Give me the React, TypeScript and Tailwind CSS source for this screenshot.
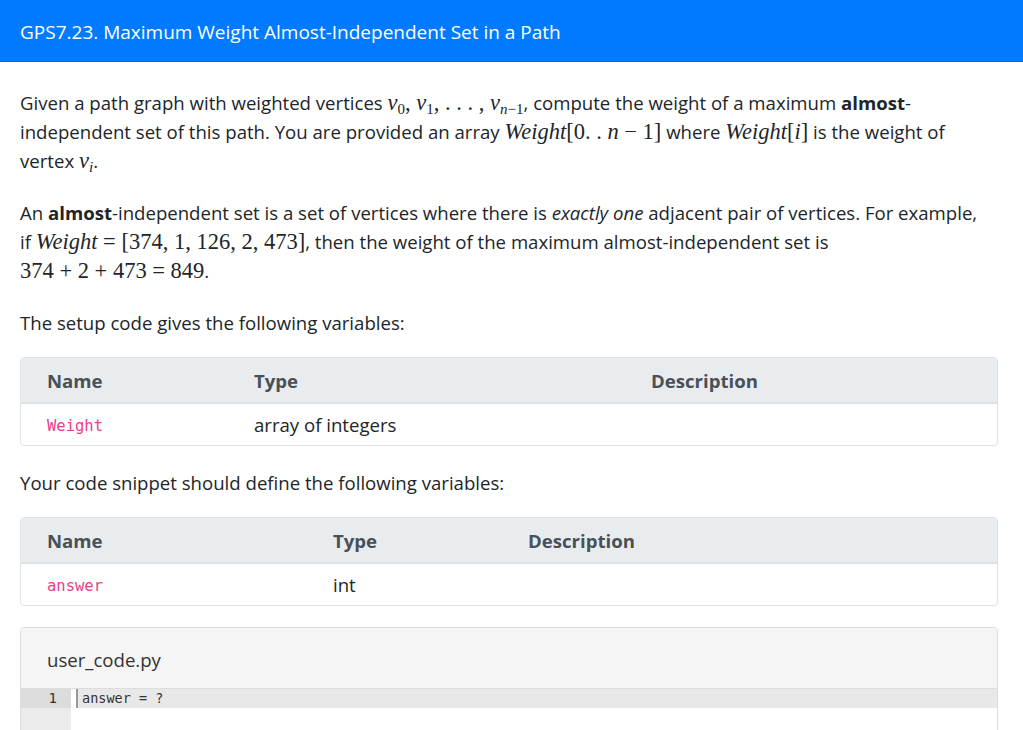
import React from 'react';

// math bits, rendered in a serif face like KaTeX
const M = ({ children }: { children: React.ReactNode }) => (
  <span className="font-['Liberation_Serif',serif] text-[22.5px] leading-none whitespace-nowrap">{children}</span>
);
const I = ({ children }: { children: React.ReactNode }) => <i>{children}</i>;
const Sub = ({ children }: { children: React.ReactNode }) => (
  <sub className="text-[15px] leading-none">{children}</sub>
);

const Code = ({ children }: { children: React.ReactNode }) => (
  <code className="font-['DejaVu_Sans_Mono',monospace] text-[15.5px] text-[#e83e8c]">{children}</code>
);

type Row = { name: string; type: string; desc: string };

const VarTable = ({ rows, w1, w2 }: { rows: Row[]; w1: string; w2: string }) => (
  <div className="border border-[#dee2e6] rounded-[4px] overflow-hidden">
    <table className="w-full text-left border-collapse">
      <thead>
        <tr className="bg-[#e9ecef] text-[#495057] border-b-2 border-[#dee2e6]">
          <th className={`${w1} h-[45px] pl-[26px] font-bold`}>Name</th>
          <th className={`${w2} h-[45px] font-bold`}>Type</th>
          <th className="h-[45px] font-bold">Description</th>
        </tr>
      </thead>
      <tbody>
        {rows.map((r) => (
          <tr key={r.name}>
            <td className="h-[42px] pl-[26px]">
              <Code>{r.name}</Code>
            </td>
            <td className="h-[42px]">{r.type}</td>
            <td className="h-[42px]">{r.desc}</td>
          </tr>
        ))}
      </tbody>
    </table>
  </div>
);

export default function App() {
  return (
    <div className="min-h-[730px] bg-white text-[#212529] font-['Open_Sans',sans-serif] text-[18.6px] leading-[29px]">
      {/* card header */}
      <div className="h-[62px] bg-[#007bff] border-b border-[#0069d9] flex items-center px-5 pt-[3px] text-white text-[19px]">
        GPS7.23. Maximum Weight Almost-Independent Set in a Path
      </div>

      <div className="pl-5 pr-[25px] pt-[26px]">
        <p className="mb-[23px]">
          Given a path graph with weighted vertices{' '}
          <M>
            <I>v</I>
            <Sub>0</Sub>, <I>v</I>
            <Sub>1</Sub>, . . . , <I>v</I>
            <Sub>
              <I>n</I>−1
            </Sub>
          </M>
          , compute the weight of a maximum <b>almost</b>-<br />
          independent set of this path. You are provided an array{' '}
          <M>
            <I>Weight</I>[0. . <I>n</I> − 1]
          </M>{' '}
          where{' '}
          <M>
            <I>Weight</I>[<I>i</I>]
          </M>{' '}
          is the weight of
          <br />
          vertex{' '}
          <M>
            <I>v</I>
            <Sub>
              <I>i</I>
            </Sub>
          </M>
          .
        </p>

        <p className="mb-[23px]">
          An <b>almost</b>-independent set is a set of vertices where there is <i>exactly one</i> adjacent pair of
          vertices. For example,
          <br />
          if{' '}
          <M>
            <I>Weight</I> = [374, 1, 126, 2, 473]
          </M>
          , then the weight of the maximum almost-independent set is
          <br />
          <M>374 + 2 + 473 = 849</M>.
        </p>

        <p className="mb-[20px]">The setup code gives the following variables:</p>

        <VarTable rows={[{ name: 'Weight', type: 'array of integers', desc: '' }]} w1="w-[233px]" w2="w-[397px]" />

        <p className="mt-[22px] mb-[20px]">Your code snippet should define the following variables:</p>

        <VarTable rows={[{ name: 'answer', type: 'int', desc: '' }]} w1="w-[312px]" w2="w-[195px]" />

        {/* code editor card */}
        <div className="mt-[21px] border border-[#dddddd] rounded-[4px] overflow-hidden">
          <div className="h-[61px] bg-[#f5f5f5] border-b border-[#dddddd] flex items-center pl-[26px] pt-[2px] text-[#333] text-[18.6px]">
            user_code.py
          </div>
          <div className="flex font-['DejaVu_Sans_Mono',monospace]">
            <div className="w-[50px] bg-[#ebebeb] min-h-[60px]">
              <div className="h-[19px] bg-[#dcdcdc] text-right pr-[14px] text-[#333] text-[14px] leading-[19px]">1</div>
            </div>
            <div className="flex-1">
              <div className="h-[19px] bg-[#e8e8e8] leading-[19px] text-[13.5px] pl-[4px] border-l-2 border-[#999] ml-[5px] text-[#333]">
                answer = ?
              </div>
            </div>
          </div>
        </div>
      </div>
    </div>
  );
}
